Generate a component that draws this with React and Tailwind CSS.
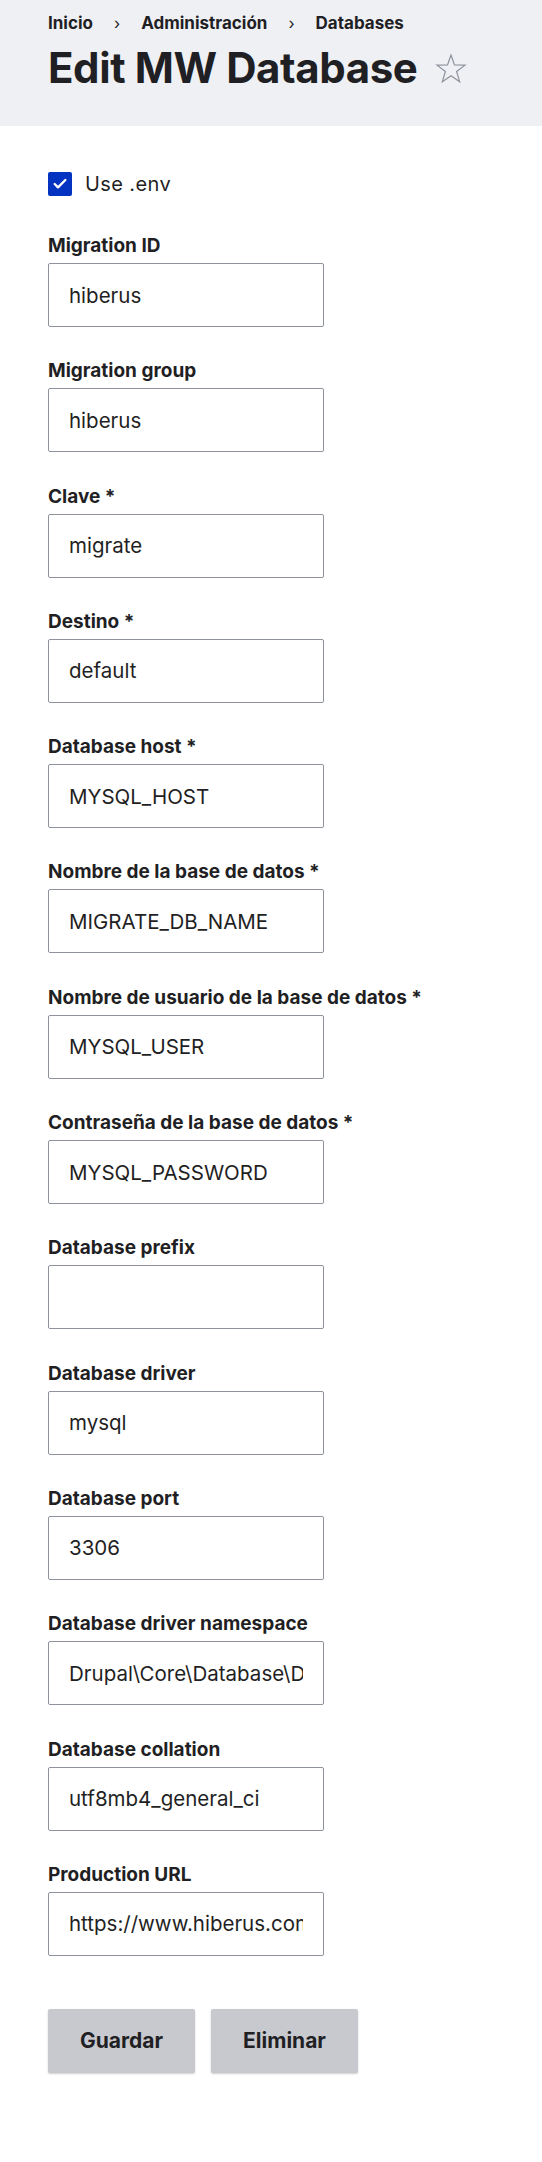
import { Check } from "lucide-react";

const fields = [
  { label: "Migration ID", value: "hiberus" },
  { label: "Migration group", value: "hiberus" },
  { label: "Clave *", value: "migrate" },
  { label: "Destino *", value: "default" },
  { label: "Database host *", value: "MYSQL_HOST" },
  { label: "Nombre de la base de datos *", value: "MIGRATE_DB_NAME" },
  { label: "Nombre de usuario de la base de datos *", value: "MYSQL_USER" },
  { label: "Contraseña de la base de datos *", value: "MYSQL_PASSWORD" },
  { label: "Database prefix", value: "" },
  { label: "Database driver", value: "mysql" },
  { label: "Database port", value: "3306" },
  { label: "Database driver namespace", value: "Drupal\\Core\\Database\\Driver\\mysql" },
  { label: "Database collation", value: "utf8mb4_general_ci" },
  { label: "Production URL", value: "https://www.hiberus.com" },
];

const Field = ({ label, value }) => {
  return (
    <div className="flex flex-col">
      <label className="text-[19px] leading-[24px] font-bold text-[#1f1f24]">{label}</label>
      <input
        type="text"
        readOnly
        value={value}
        className="mt-[5px] h-[64px] w-[276px] rounded-[2px] border border-[#8e929c] bg-white px-[20px] text-[20.5px] text-[#1f1f24] outline-none"
      />
    </div>
  );
};

export default function App() {
  return (
    <div className="min-h-[2162px] bg-white font-['Inter',sans-serif] text-[#1f1f24]">
      <header className="bg-[#eff0f4] px-[48px] pt-[11px] pb-[34px]">
        <nav className="flex items-center text-[17px] leading-[24px] font-bold">
          <span>Inicio</span>
          <span className="mx-[21px] text-[16px] font-normal">›</span>
          <span>Administración</span>
          <span className="mx-[21px] text-[16px] font-normal">›</span>
          <span>Databases</span>
        </nav>
        <h1 className="mt-[9px] flex items-center text-[42px] leading-[48px] font-bold tracking-[-0.4px]">
          Edit MW Database
          <svg className="ml-[18px] mt-[2px]" width="32" height="32" viewBox="0 0 24 24" fill="none" stroke="#8e929c" strokeWidth="0.9" strokeLinejoin="miter">
            <polygon points="12,1.5 14.6,9 22.5,9.1 16.2,13.9 18.5,21.5 12,17 5.5,21.5 7.8,13.9 1.5,9.1 9.4,9" />
          </svg>
        </h1>
      </header>

      <main className="px-[48px] pt-[46px]">
        <div className="flex items-center gap-[13px]">
          <span className="flex h-[24px] w-[24px] items-center justify-center rounded-[2px] bg-[#0433c2]">
            <Check size={16} color="white" strokeWidth={3.5} />
          </span>
          <span className="text-[20px] leading-[24px] tracking-[0.4px]">Use .env</span>
        </div>

        <div className="mt-[38px] flex flex-col gap-[32.3px]">
          {fields.map((f) => (
            <Field key={f.label} label={f.label} value={f.value} />
          ))}
        </div>

        <div className="mt-[53px] flex gap-[16px]">
          <button className="h-[64px] w-[147px] rounded-[2px] bg-[#c8c9cf] text-[21px] font-bold text-[#1f1f24] shadow-[0_1px_2px_rgba(0,0,0,0.2)]">
            Guardar
          </button>
          <button className="h-[64px] w-[147px] rounded-[2px] bg-[#c8c9cf] text-[21px] font-bold text-[#1f1f24] shadow-[0_1px_2px_rgba(0,0,0,0.2)]">
            Eliminar
          </button>
        </div>
      </main>
    </div>
  );
}
